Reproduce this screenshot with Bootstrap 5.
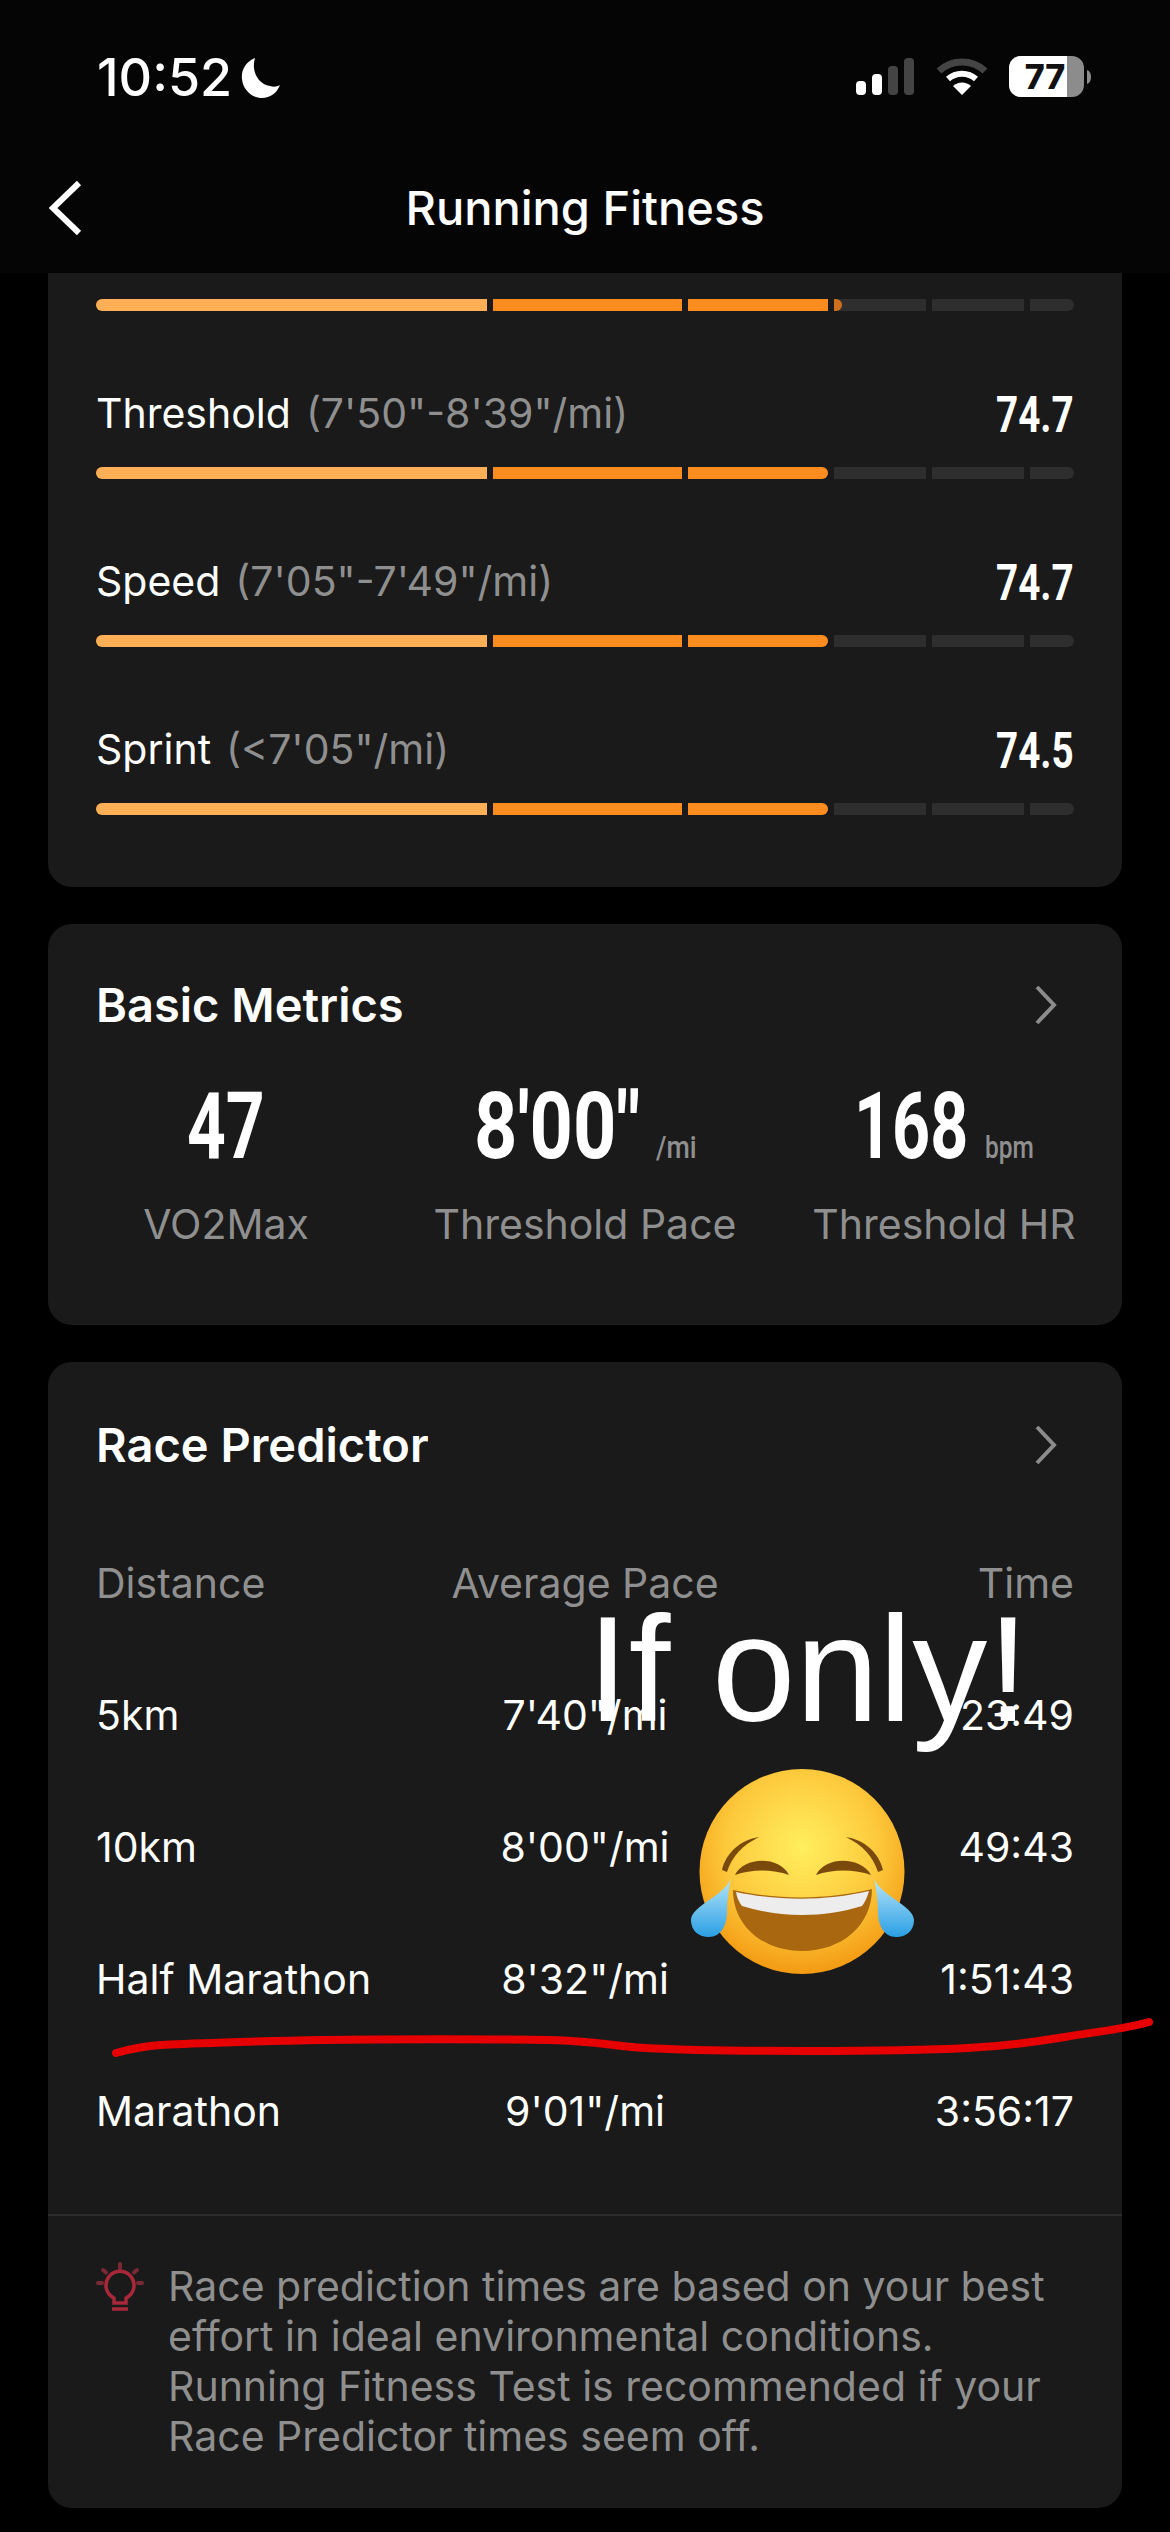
<!DOCTYPE html>
<html lang="en">
<head>
  <meta charset="UTF-8">
  <meta name="viewport" content="width=device-width, initial-scale=1.0">
  <title>Running Fitness</title>
  <link href="https://cdn.jsdelivr.net/npm/bootstrap@5.3.0/dist/css/bootstrap.min.css" rel="stylesheet">
  <style>
    body {
      background: #000;
      color: #fff;
      font-family: Inter, "Liberation Sans", sans-serif;
      width: 1170px;
      height: 2532px;
      overflow: hidden;
      position: relative;
    }
    .top-head {
      background: #050505;
      height: 273px;
      padding-top: 48px;
    }
    .status-row {
      height: 60px;
      padding: 0 79px 0 97px;
    }
    .clock {
      font-size: 52px;
      font-weight: 500;
      line-height: 60px;
    }
    .title-row {
      display: grid;
      grid-template-columns: 1fr auto 1fr;
      align-items: center;
      height: 60px;
      margin-top: 70px;
      padding: 0 48px;
    }
    .page-title {
      font-size: 47px;
      font-weight: 500;
      line-height: 60px;
    }
    .panel {
      background: #1a1a1a;
      border: 0;
      border-radius: 24px;
      margin: 0 48px 37px;
      color: #fff;
    }
    .panel-cut {
      border-top-left-radius: 0;
      border-top-right-radius: 0;
      padding: 26px 48px 72px;
    }
    .seg-track {
      display: flex;
      gap: 6px;
      height: 12px;
    }
    .seg {
      background: #2e2e2e;
      position: relative;
      overflow: hidden;
    }
    .seg:first-child { border-radius: 6px 0 0 6px; }
    .seg:last-child { border-radius: 0 6px 6px 0; }
    .seg-lo { background: #ffb057; }
    .seg-hi { background: #ff8c1f; }
    .seg-end { border-radius: 0 6px 6px 0; }
    .seg-chip {
      position: absolute;
      left: 0;
      top: 0;
      bottom: 0;
      background: #cf6f1b;
      border-radius: 0 6px 6px 0;
    }
    .zone-head {
      height: 60px;
      margin: 72px 0 24px;
      line-height: 60px;
      font-size: 41px;
    }
    .zone-range {
      color: #8f8f8f;
      margin-left: 15px;
    }
    .squeeze {
      display: inline-block;
      font-family: Roboto, "Liberation Sans", sans-serif;
      font-weight: 700;
      line-height: 1;
      transform-origin: left center;
    }
    .zone-val { font-size: 50px; margin-top: 3px; }
    .panel-title {
      font-size: 47px;
      font-weight: 600;
      line-height: 64px;
    }
    .panel-head { padding: 49px 48px 0; }
    .chev { margin-right: 17px; }
    .metric-grid {
      display: grid;
      grid-template-columns: 260px 1fr 260px;
      margin: 44px 48px 76px;
      text-align: center;
    }
    .metric-big {
      height: 80px;
      line-height: 80px;
      font-size: 92px;
    }
    .metric-big .squeeze { vertical-align: baseline; }
    .metric-unit {
      font-size: 32px;
      font-weight: 500;
      color: #8f8f8f;
      margin-left: 16px;
    }
    .metric-label {
      color: #8f8f8f;
      font-size: 41px;
      line-height: 50px;
      margin: 38px -4px 0;
      white-space: nowrap;
    }
    .race-head { padding-top: 51px; }
    .race-row {
      display: grid;
      grid-template-columns: 1fr auto 1fr;
      height: 60px;
      line-height: 60px;
      font-size: 41px;
      margin: 0 48px 72px;
    }
    .race-labels {
      color: #8f8f8f;
      margin-top: 76px;
    }
    .race-last { margin-bottom: 73px; }
    .race-note {
      border-top: 2px solid #2c2c2c;
      padding: 45px 48px 47px;
      color: #8f8f8f;
      font-size: 41px;
      line-height: 50px;
      white-space: nowrap;
    }
    .note-icon { width: 48px; height: 50px; margin-right: 24px; flex: none; }
    .over-text {
      position: absolute;
      left: 587px;
      top: 1583px;
      font-family: "Liberation Sans", sans-serif;
      font-size: 150px;
      line-height: 172px;
      white-space: nowrap;
    }
    .over-emoji { position: absolute; left: 691px; top: 1768px; }
    .over-line { position: absolute; left: 0; top: 2000px; }
  </style>
</head>
<body>
  <div class="top-head">
    <div class="status-row d-flex align-items-center justify-content-between">
      <div class="d-flex align-items-center gap-2">
        <span class="clock">10:52</span>
        <svg width="42" height="42" viewBox="0 0 42 42"><path d="M15 1C5 5 1 14 2 22c1 11 10 19 20 19 8 0 15-5 18-13-3 2-7 2-10 1C18 27 11 14 15 1Z" fill="#fff"/></svg>
      </div>
      <svg width="235" height="60" viewBox="0 -8 235 60">
        <rect x="0" y="25" width="10" height="14" rx="4" fill="#fff"/>
        <rect x="16" y="18" width="10" height="21" rx="4" fill="#fff"/>
        <rect x="32" y="10" width="10" height="29" rx="4" fill="#444"/>
        <rect x="48" y="2" width="10" height="37" rx="4" fill="#444"/>
        <path d="M83 15a34 34 0 0 1 46 0" fill="none" stroke="#444" stroke-width="7"/>
        <path d="M92 23a21 21 0 0 1 28 0" fill="none" stroke="#fff" stroke-width="6"/>
        <path d="M106 39l-9-9a13 13 0 0 1 18 0Z" fill="#fff"/>
        <rect x="153" y="0" width="75" height="41" rx="12" fill="#8c8c8c"/>
        <path d="M165 0h46v41h-46a12 12 0 0 1-12-12V12a12 12 0 0 1 12-12Z" fill="#fff"/>
        <path d="M231 14c3 1 4 4 4 7s-1 6-4 7Z" fill="#8c8c8c"/>
        <text x="189" y="33" text-anchor="middle" font-family="Inter, sans-serif" font-size="34" font-weight="800" fill="#111">77</text>
      </svg>
    </div>
    <div class="title-row">
      <svg width="34" height="56" viewBox="0 0 34 56"><path d="M31 3L5 28l26 25" fill="none" stroke="#fff" stroke-width="6"/></svg>
      <div class="page-title">Running Fitness</div>
    </div>
  </div>

  <div class="card panel panel-cut">
    <div class="seg-track" id="bar0"></div>
    <div class="zone-head d-flex justify-content-between align-items-center"><div>Threshold<span class="zone-range">(7'50"-8'39"/mi)</span></div><span class="squeeze zone-val" data-fit="78">74.7</span></div>
    <div class="seg-track" id="bar1"></div>
    <div class="zone-head d-flex justify-content-between align-items-center"><div>Speed<span class="zone-range">(7'05"-7'49"/mi)</span></div><span class="squeeze zone-val" data-fit="78">74.7</span></div>
    <div class="seg-track" id="bar2"></div>
    <div class="zone-head d-flex justify-content-between align-items-center"><div>Sprint<span class="zone-range">(&lt;7'05"/mi)</span></div><span class="squeeze zone-val" data-fit="78">74.5</span></div>
    <div class="seg-track" id="bar3"></div>
  </div>

  <div class="card panel">
    <div class="panel-head d-flex justify-content-between align-items-center">
      <div class="panel-title">Basic Metrics</div>
      <svg class="chev" width="22" height="40" viewBox="0 0 22 40"><path d="M2 2l17 18L2 38" fill="none" stroke="#8c8c8c" stroke-width="4"/></svg>
    </div>
    <div class="metric-grid">
      <div><div class="metric-big"><span class="squeeze" data-fit="78">47</span></div><div class="metric-label">VO2Max</div></div>
      <div><div class="metric-big"><span class="squeeze" data-fit="166">8'00"</span><span class="squeeze metric-unit" data-fit="41">/mi</span></div><div class="metric-label">Threshold Pace</div></div>
      <div><div class="metric-big"><span class="squeeze" data-fit="114">168</span><span class="squeeze metric-unit" data-fit="49">bpm</span></div><div class="metric-label">Threshold HR</div></div>
    </div>
  </div>

  <div class="card panel">
    <div class="panel-head race-head d-flex justify-content-between align-items-center">
      <div class="panel-title">Race Predictor</div>
      <svg class="chev" width="22" height="40" viewBox="0 0 22 40"><path d="M2 2l17 18L2 38" fill="none" stroke="#8c8c8c" stroke-width="4"/></svg>
    </div>
    <div class="race-row race-labels"><div>Distance</div><div>Average Pace</div><div class="text-end">Time</div></div>
    <div class="race-row"><div>5km</div><div>7'40"/mi</div><div class="text-end">23:49</div></div>
    <div class="race-row"><div>10km</div><div>8'00"/mi</div><div class="text-end">49:43</div></div>
    <div class="race-row"><div>Half Marathon</div><div>8'32"/mi</div><div class="text-end">1:51:43</div></div>
    <div class="race-row race-last"><div>Marathon</div><div>9'01"/mi</div><div class="text-end">3:56:17</div></div>
    <div class="race-note d-flex">
      <svg class="note-icon" viewBox="0 0 48 50" fill="none" stroke-linecap="round">
        <g stroke="#7a2a35" stroke-width="4">
          <path d="M24 3v4M7 9l3 2.500M41 9l-3 2.500M2 22h4M42 22h4"/>
        </g>
        <path d="M18 37a14 14 0 1 1 12 0v5H18Z" stroke="#a8283a" stroke-width="3.500"/>
        <path d="M16 48h16" stroke="#a8283a" stroke-width="3.500" stroke-linecap="butt"/>
      </svg>
      <div>Race prediction times are based on your best<br>effort in ideal environmental conditions.<br>Running Fitness Test is recommended if your<br>Race Predictor times seem off.</div>
    </div>
  </div>

  <!-- stuff drawn on top of the screenshot -->
  <div class="over-text">If only!</div>
  <svg class="over-emoji" width="223" height="207" viewBox="0 0 223 207">
    <defs>
      <radialGradient id="faceFill" cx="50%" cy="38%" r="62%">
        <stop offset="0" stop-color="#ffef5e"/>
        <stop offset="0.6" stop-color="#fdc93c"/>
        <stop offset="1" stop-color="#f39a12"/>
      </radialGradient>
      <linearGradient id="tearFill" x1="0" y1="0" x2="0" y2="1">
        <stop offset="0" stop-color="#b8e6fb"/>
        <stop offset="1" stop-color="#2a9fe3"/>
      </linearGradient>
    </defs>
    <circle cx="111" cy="103.500" r="102.500" fill="url(#faceFill)"/>
    <path d="M31 102C35 85 49 72 68 69c-16 8-27 19-32 35Z" fill="#7a4a0c"/>
    <path d="M192 102C188 85 174 72 155 69c16 8 27 19 32 35Z" fill="#7a4a0c"/>
    <path d="M44 107c8-18 44-20 54 0-16-6-38-6-54 0Z" fill="#7a4a0c"/>
    <path d="M125 107c10-20 46-18 55 0-16-6-39-6-55 0Z" fill="#7a4a0c"/>
    <path d="M42 122c44 10 95 10 139-1 0 36-30 62-70 62s-69-26-69-61Z" fill="#a9680f"/>
    <path d="M45 124c42 9 91 9 133-1-2 7-4 11-7 15-38 12-82 12-120 0-3-4-5-8-6-14Z" fill="#ededed"/>
    <path d="M40 110C36 126 0 138 0 152c0 11 8 17 18 17 12 0 18-12 18-25 0-12 2-24 4-34Z" fill="url(#tearFill)"/>
    <path d="M183 110c4 16 40 28 40 42 0 11-8 17-18 17-12 0-18-12-18-25 0-12-2-24-4-34Z" fill="url(#tearFill)"/>
  </svg>
  <svg class="over-line" width="1170" height="70" viewBox="0 0 1170 70">
    <path d="M116 53C130 49 145 46 161 45S260 41 323 40S500 39 549 40S610 46 645 48S760 51 807 51S930 50 968 48S1035 42 1065 37S1130 28 1149 22" fill="none" stroke="#e60000" stroke-width="8" stroke-linecap="round"/>
  </svg>

  <script src="https://cdn.jsdelivr.net/npm/bootstrap@5.3.0/dist/js/bootstrap.bundle.min.js"></script>
  <script>
    // segment widths in px, then how far the fill goes on each bar
    const segs = [391, 190, 140, 92, 92, 44];
    const fills = [
      { full: 3, chip: 8 },
      { full: 3, chip: 0 },
      { full: 3, chip: 0 },
      { full: 3, chip: 0 }
    ];
    fills.forEach((f, i) => {
      const track = document.getElementById('bar' + i);
      segs.forEach((w, n) => {
        const seg = document.createElement('div');
        seg.className = 'seg';
        seg.style.width = w + 'px';
        if (n === 0) seg.classList.add('seg-lo');
        if (n === 1 || n === 2) seg.classList.add('seg-hi');
        if (n === 2 && !f.chip) seg.classList.add('seg-end');
        if (n === 3 && f.chip) {
          const chip = document.createElement('div');
          chip.className = 'seg-chip';
          chip.style.width = f.chip + 'px';
          seg.appendChild(chip);
        }
        track.appendChild(seg);
      });
    });

    // no condensed font installed, so squeeze the numbers to the width they should have
    document.querySelectorAll('.squeeze').forEach(el => {
      const w = el.offsetWidth;
      const fit = Number(el.dataset.fit);
      el.style.transform = `scaleX(${fit / w})`;
      el.style.marginRight = `${fit - w}px`;
    });
  </script>
</body>
</html>
